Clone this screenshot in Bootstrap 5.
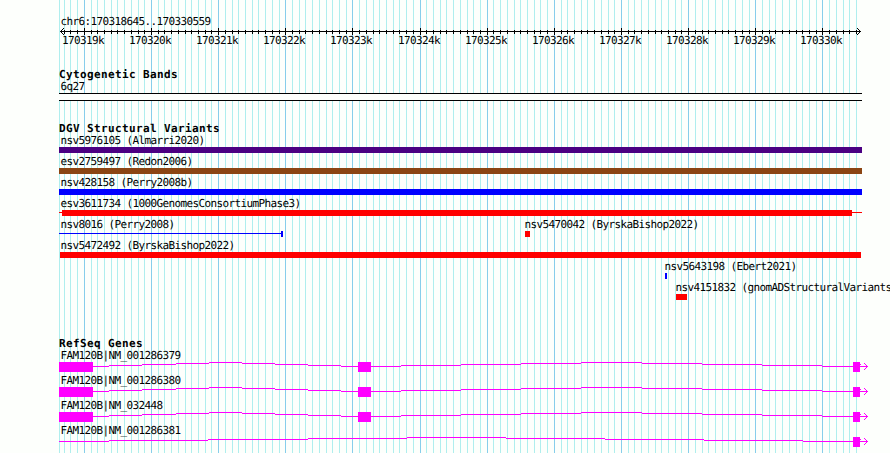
<!DOCTYPE html>
<html lang="en">
<head>
  <meta charset="UTF-8">
  <meta name="viewport" content="width=device-width, initial-scale=1.0">
  <title>chr6:170318645..170330559</title>
  <link href="https://cdn.jsdelivr.net/npm/bootstrap@5.3.0/dist/css/bootstrap.min.css" rel="stylesheet">
  <style>
    body {
      background: #fdfffc;
      color: #000;
      font: 11px/13px "DejaVu Sans Mono", "Liberation Mono", monospace;
      letter-spacing: -.622px;
      text-rendering: geometricPrecision;
    }
    .browser-panel { width: 890px; height: 453px; }
    .browser-panel svg { display: block; shape-rendering: crispEdges; }
    .grid-lines { z-index: 0; }
    .tracks { z-index: 1; padding-top: 15px; }
    .label-line { height: 13px; padding-left: 60.5px; }
    .track-title {
      height: 12px;
      margin: 0;
      padding-left: 59px;
      font: bold 11px/13px "DejaVu Sans Mono", monospace;
      letter-spacing: .378px;
    }
    .bands { margin-top: 20px; }
    .variants { margin-top: 21px; }
    .genes { margin-top: 35px; }
    .variant-row { height: 21px; }
    .gene-row { height: 25px; }
  </style>
</head>
<body>
  <div class="browser-panel position-relative overflow-hidden">
    <svg class="grid-lines position-absolute top-0 start-0" id="grid" width="890" height="453"></svg>

    <main class="tracks position-relative d-flex flex-column">
      <section>
        <div class="label-line">chr6:170318645..170330559</div>
        <svg id="ruler" width="890" height="20"></svg>
      </section>

      <section class="bands">
        <h2 class="track-title">Cytogenetic Bands</h2>
        <div class="label-line">6q27</div>
        <svg width="890" height="8">
          <rect x="59" width="803" height="8" fill="#fdfffc"/>
          <path d="M59 .5h803M59 7.5h803" stroke="#000"/>
        </svg>
      </section>

      <section class="variants">
        <h2 class="track-title">DGV Structural Variants</h2>
        <div id="variants"></div>
      </section>

      <section class="genes">
        <h2 class="track-title">RefSeq Genes</h2>
        <div id="genes"></div>
      </section>
    </main>
  </div>

  <script src="https://cdn.jsdelivr.net/npm/bootstrap@5.3.0/dist/js/bootstrap.bundle.min.js"></script>
  <script>
    const START = 170318645;
    const END = 170330559;
    const toX = (pos) => Math.round(60 + (pos - START) * 800 / (END - START + 1));

    // grid + ruler
    let grid = '<rect x="59" width="1" height="453" fill="#afeeee"/>';
    let ruler = '<path d="M60 3.5h801" stroke="#000"/>' +
      '<path d="M60 3h1v1h-1zM61 2h1v3h-1zM62 1h1v1h-1zM62 5h1v1h-1zM63 0h1v1h-1zM63 6h1v1h-1z"/>' +
      '<path d="M860 3h1v1h-1zM859 2h1v3h-1zM858 1h1v1h-1zM858 5h1v1h-1zM857 0h1v1h-1zM857 6h1v1h-1z"/>';
    for (let pos = 170318700; pos < END; pos += 100) {
      const x = toX(pos);
      const major = pos % 1000 === 0;
      grid += `<rect x="${x}" width="1" height="453" fill="${major ? '#87ceeb' : '#afeeee'}"/>`;
      ruler += `<rect x="${x}" y="${major ? 0 : 2}" width="1" height="${major ? 7 : 4}"/>`;
      if (major) ruler += `<text x="${x - 22}" y="16">${pos / 1000}k</text>`;
    }
    document.getElementById('grid').innerHTML = grid;
    document.getElementById('ruler').innerHTML = ruler;

    // shapes: [x, y, width, height], label: [x, text]
    const variants = [
      { color: '#4b0082', labels: [[60.5, 'nsv5976105 (Almarri2020)']], shapes: [[59, 13, 803, 6]] },
      { color: '#8b4513', labels: [[60.5, 'esv2759497 (Redon2006)']], shapes: [[59, 13, 803, 6]] },
      { color: '#0000ff', labels: [[60.5, 'nsv428158 (Perry2008b)']], shapes: [[59, 13, 803, 6]] },
      { color: '#ff0000', labels: [[60.5, 'esv3611734 (1000GenomesConsortiumPhase3)']], shapes: [[59, 15, 803, 1], [62, 13, 790, 6]] },
      { color: '#0000ff', labels: [[60.5, 'nsv8016 (Perry2008)'], [524.5, 'nsv5470042 (ByrskaBishop2022)']],
        shapes: [[59, 15, 223, 1], [281, 13, 2, 6], [525, 13, 5, 6, '#ff0000']] },
      { color: '#ff0000', labels: [[60.5, 'nsv5472492 (ByrskaBishop2022)']], shapes: [[60, 13, 801, 6]] },
      { color: '#0000ff', labels: [[664.5, 'nsv5643198 (Ebert2021)']], shapes: [[665, 13, 2, 6]] },
      { color: '#ff0000', labels: [[675.5, 'nsv4151832 (gnomADStructuralVariants)']], shapes: [[676, 13, 11, 6]] }
    ];
    document.getElementById('variants').innerHTML = variants.map((v) => `
      <svg class="variant-row" width="890" height="21">
        ${v.shapes.map(([x, y, w, h, c]) => `<rect x="${x}" y="${y}" width="${w}" height="${h}" fill="${c || v.color}"/>`).join('')}
        ${v.labels.map(([x, t]) => `<text x="${x}" y="10">${t}</text>`).join('')}
      </svg>`).join('');

    // intron steps: [x from, x to, y]
    const spliced = [
      [93, 109, 17], [109, 142, 16], [142, 176, 15], [176, 209, 14], [209, 242, 13],
      [242, 275, 14], [275, 308, 15], [308, 341, 16], [341, 358, 17],
      [371, 401, 17], [401, 461, 16], [461, 521, 15], [521, 581, 14], [581, 642, 13],
      [642, 702, 14], [702, 762, 15], [762, 822, 16], [822, 853, 17]
    ];
    const single = [
      [59, 109, 17], [109, 208, 16], [208, 308, 15], [308, 407, 14],
      [407, 506, 13], [506, 605, 14], [605, 704, 15], [704, 803, 16], [803, 853, 17]
    ];
    const exons = [[59, 34], [358, 13], [853, 7]];
    const genes = [
      ['FAM120B|NM_001286379', spliced, exons],
      ['FAM120B|NM_001286380', spliced, exons],
      ['FAM120B|NM_032448', spliced, exons],
      ['FAM120B|NM_001286381', single, [[853, 7]]]
    ];
    document.getElementById('genes').innerHTML = genes.map(([name, introns, blocks]) => `
      <svg class="gene-row" width="890" height="25" fill="#ff00ff">
        ${introns.map(([a, b, y]) => `<rect x="${a}" y="${y}" width="${b - a}" height="1"/>`).join('')}
        ${blocks.map(([x, w]) => `<rect x="${x}" y="13" width="${w}" height="10"/>`).join('')}
        <path d="M860 17h8v1h-8zM860 15h1v1h-1zM866 16h1v1h-1zM866 18h1v1h-1zM865 15h1v1h-1zM865 19h1v1h-1zM864 14h1v1h-1zM864 20h1v1h-1z"/>
        <text x="60.5" y="10" fill="#000">${name}</text>
      </svg>`).join('');
  </script>
</body>
</html>
